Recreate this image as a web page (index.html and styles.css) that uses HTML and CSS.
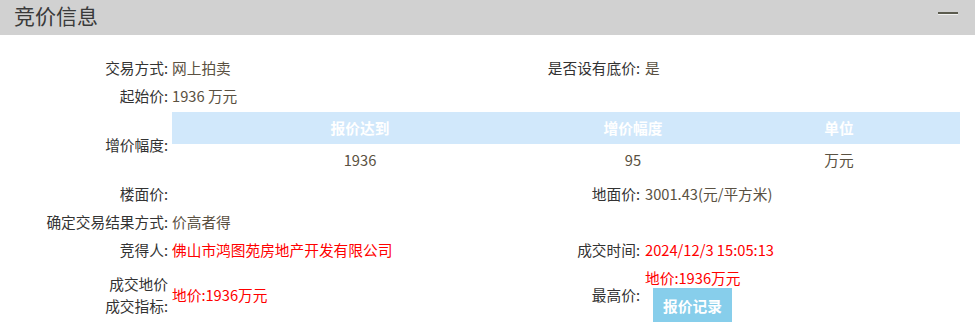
FILE: index.html
```html
<!DOCTYPE html>
<html lang="zh">
<head>
<meta charset="utf-8">
<link rel="stylesheet" href="styles.css">
</head>
<body>
<div class="panel">
  <div class="panel-head">
    <span class="panel-title">竞价信息</span>
    <span class="collapse" aria-label="收起"></span>
  </div>
  <div class="info">
    <div class="lbl">交易方式:</div>
    <div class="val">网上拍卖</div>
    <div class="lbl">是否设有底价:</div>
    <div class="val val-r">是</div>

    <div class="lbl">起始价:</div>
    <div class="val">1936 万元</div>
    <div class="lbl"></div>
    <div class="val val-r"></div>

    <div class="lbl">增价幅度:</div>
    <div class="val wide">
      <table class="step">
        <thead>
          <tr><th class="c1">报价达到</th><th class="c2">增价幅度</th><th class="c3">单位</th></tr>
        </thead>
        <tbody>
          <tr><td>1936</td><td>95</td><td>万元</td></tr>
        </tbody>
      </table>
    </div>

    <div class="lbl">楼面价:</div>
    <div class="val"></div>
    <div class="lbl">地面价:</div>
    <div class="val val-r">3001.43(元/平方米)</div>

    <div class="lbl">确定交易结果方式:</div>
    <div class="val">价高者得</div>
    <div class="lbl"></div>
    <div class="val val-r"></div>

    <div class="lbl">竞得人:</div>
    <div class="val red">佛山市鸿图苑房地产开发有限公司</div>
    <div class="lbl">成交时间:</div>
    <div class="val val-r red">2024/12/3 15:05:13</div>

    <div class="lbl lbl-2">成交地价<br>成交指标:</div>
    <div class="val red">地价:1936万元</div>
    <div class="lbl">最高价:</div>
    <div class="val val-r top">
      <div class="red top-line">地价:1936万元</div>
      <button class="btn" type="button">报价记录</button>
    </div>
  </div>
</div>
</body>
</html>
```

FILE: styles.css
```css
* { box-sizing: border-box; }
html, body { margin: 0; padding: 0; background: #fff; }
body {
  font-family: "Noto Sans CJK SC", "Noto Sans", sans-serif;
  font-size: 14.7px;
  color: #333;
}
.panel-head {
  height: 35px;
  background: #d1d1d1;
  display: flex;
  align-items: center;
  justify-content: space-between;
  padding: 0 17px 0 14px;
}
.panel-title {
  font-size: 21px;
  line-height: 28px;
  color: #3a3a3a;
  margin-top: -6px;
}
.collapse {
  width: 20px;
  height: 3px;
  border-top: 2px solid #5b5b4e;
  border-bottom: 1px solid #f2f2f2;
  margin-top: -9px;
}
.info {
  display: grid;
  grid-template-columns: 168px 304px 168px 1fr;
  grid-auto-rows: minmax(28px, auto);
  padding: 19px 15px 0 0;
  align-items: center;
}
.lbl {
  text-align: right;
  color: #333;
  line-height: 20px;
}
.lbl-2 { line-height: 22px; }
.val {
  padding-left: 4px;
  color: #5a5142;
  line-height: 20px;
}
.val-r { padding-left: 5px; }
.wide { grid-column: 2 / 5; padding: 2px 0 4px 4px; }
.red { color: #ff0000; }
.top { padding-top: 4px; padding-bottom: 4px; }
.top-line { line-height: 20px; }
.step {
  width: 100%;
  border-collapse: collapse;
  table-layout: fixed;
}
.step th {
  background: #d1e8fb;
  color: #fff;
  font-weight: bold;
  height: 32px;
  padding: 0;
  text-align: center;
}
.step .c1 { width: 376px; }
.step .c2 { width: 170px; }
.step td {
  height: 32px;
  padding: 0;
  text-align: center;
  color: #5a5142;
}
.btn {
  display: block;
  margin: 0 0 0 8px;
  width: 79px;
  height: 34px;
  border: 0;
  background: #87ceeb;
  color: #fff;
  font-family: inherit;
  font-size: 14.7px;
  font-weight: bold;
  padding: 0;
}
```
